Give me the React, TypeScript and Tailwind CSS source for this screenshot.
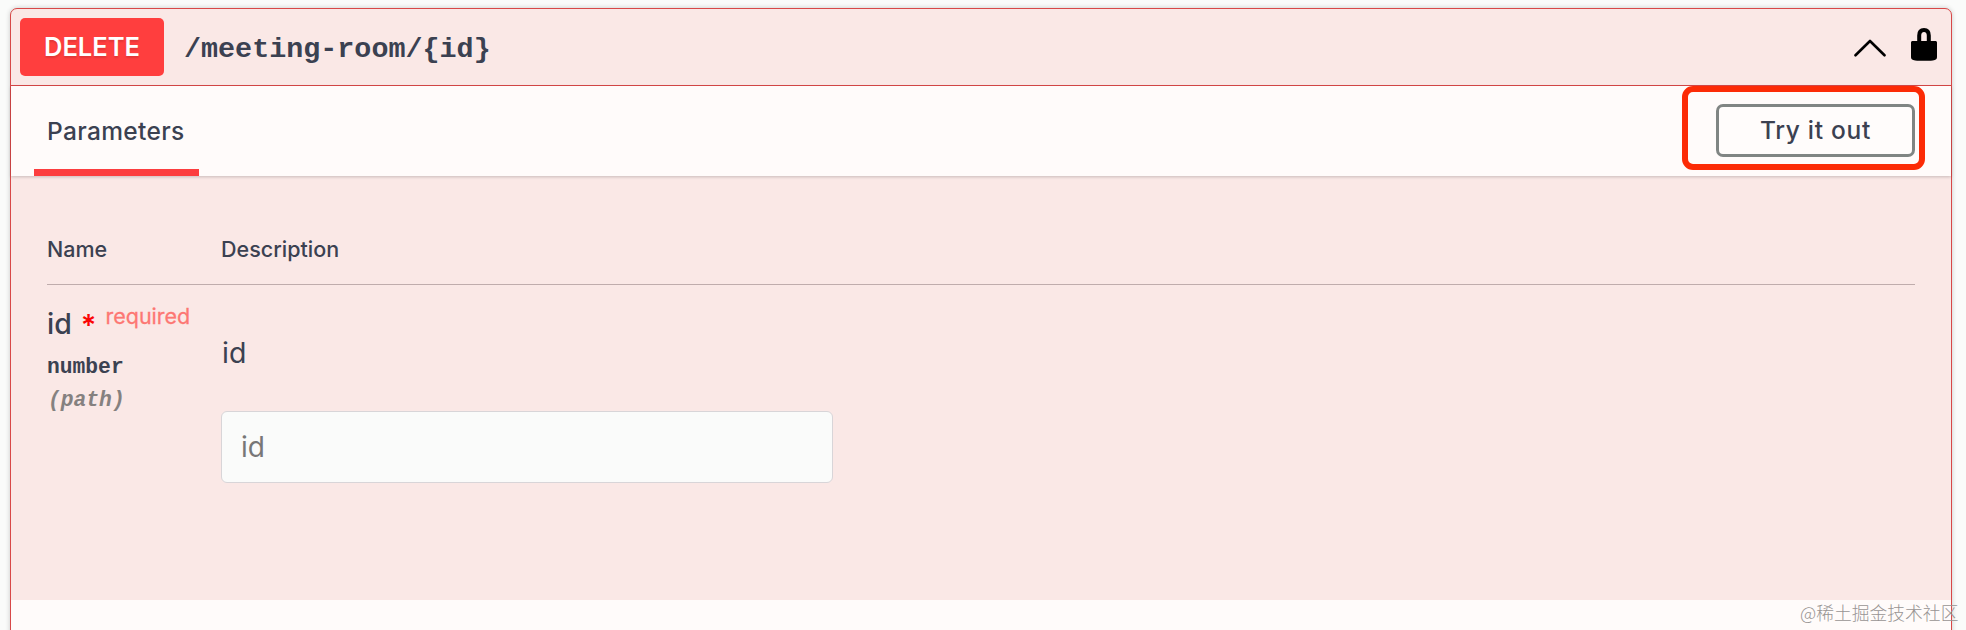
import React from 'react';

function Header() {
  return (
    <div className="flex h-[77px] items-start border-b border-[#d84848] pl-[9px]">
      <div className="mt-[9px] flex h-[58px] w-[144px] items-center justify-center rounded-[5px] bg-[#ff3e3e] text-[25.500px] font-semibold text-white [text-shadow:0_2px_2px_rgba(0,0,0,0.12)]">
        DELETE
      </div>
      <div className="ml-[20px] mt-[23px] font-['Liberation_Mono',monospace] text-[28.400px] leading-[36px] font-bold whitespace-nowrap">
        /meeting-room/{'{id}'}
      </div>
      <svg className="mt-[30px] ml-auto h-[18px] w-[32px]" viewBox="0 0 32 18" fill="none" stroke="#000" strokeWidth="2.600" strokeLinecap="round" strokeLinejoin="round">
        <path d="M1.500 16.300 16 2 30.500 16.300" />
      </svg>
      <svg className="mt-[19px] mr-[14px] ml-[25px] h-[33px] w-[26px]" viewBox="0 0 26 33">
        <path d="M8.200 15V7.500C8.200 3.800 10 2 13 2s4.800 1.800 4.800 5.500V15" fill="none" stroke="#000" strokeWidth="4" />
        <path d="M1.500 13h23c.8 0 1.500.7 1.500 1.500V29c0 1.600-.7 2.500-2.200 3-1.300.6-2.600.8-4 .8H6.200c-1.400 0-2.700-.2-4-.8C.7 31.500 0 30.600 0 29V14.500c0-.8.7-1.500 1.500-1.500Z" />
      </svg>
    </div>
  );
}

function SectionBar() {
  return (
    <div className="relative flex h-[90px] justify-between bg-[#fffbfa] pr-[36px] pl-[23px] shadow-[0_1px_3px_rgba(0,0,0,0.2)]">
      <div className="flex h-[90px] w-[165px] flex-col justify-between">
        <div className="pt-[28px] pl-[13px] text-[24.500px] leading-[34px] font-medium tracking-[0.350px]">
          Parameters
        </div>
        <div className="h-[7px] bg-[#fc3d3e]" />
      </div>
      <button className="mt-[18px] flex h-[53px] w-[199px] items-center justify-center rounded-[7px] border-[3px] border-[#808583] bg-[#fffcfb] text-[24.500px] font-medium tracking-[0.700px]">
        Try it out
      </button>
      <div className="pointer-events-none absolute top-0 left-[1671px] h-[84px] w-[243px] rounded-[11px] border-[6px] border-[#fc2b06]" />
    </div>
  );
}

function Parameters() {
  return (
    <div className="h-[424px] px-[36px] pt-[53px]">
      <div className="flex h-[56px] border-b border-[#bfacac] text-[21.500px] leading-[40px] font-medium">
        <div className="w-[174px]">Name</div>
        <div>Description</div>
      </div>
      <div className="flex">
        <div className="w-[174px] shrink-0 pt-[16px]">
          <div className="flex h-[46px] items-start whitespace-nowrap">
            <span className="text-[28.500px] leading-[46px] font-medium">id</span>
            <span className="ml-[9px] text-[29px] leading-[47px] font-semibold text-[#fb0505]">*</span>
            <span className="ml-[9px] text-[21.500px] leading-[31px] text-[#fd7773] [-webkit-text-stroke:0.300px_#fd7773]">required</span>
          </div>
          <div className="mt-[4px] font-['Liberation_Mono',monospace] text-[21.300px] leading-[32px] font-bold">number</div>
          <div className="pl-[1px] font-['Liberation_Mono',monospace] text-[21.300px] leading-[34px] font-bold text-[#858180] italic">(path)</div>
        </div>
        <div className="pt-[48px]">
          <div className="pl-[1px] text-[28.500px] leading-[40px]">id</div>
          <input
            placeholder="id"
            className="mt-[38px] block h-[72px] w-[612px] rounded-[6px] border border-[#d8d5d8] bg-[#fafbfa] px-[19px] text-[28px] outline-none placeholder:text-[#777777]"
          />
        </div>
      </div>
    </div>
  );
}

export default function App() {
  return (
    <div className="relative h-[630px] w-[1966px] overflow-hidden bg-[#fafbfa] pt-[8px] pl-[10px] font-['Inter',sans-serif] text-[#3b4151]">
      <div className="h-[700px] w-[1942px] rounded-[7px] border border-[#d84848] bg-[#fae8e6] shadow-[0_0_5px_rgba(0,0,0,0.2)]">
        <Header />
        <SectionBar />
        <Parameters />
        <div className="h-[60px] bg-[#fffbfa]" />
      </div>
      <div className="absolute top-[599px] left-[1800px] font-['Noto_Sans_CJK_SC',sans-serif] text-[17.800px] leading-[26px] font-light whitespace-nowrap text-[#989493]">
        @稀土掘金技术社区
      </div>
    </div>
  );
}
